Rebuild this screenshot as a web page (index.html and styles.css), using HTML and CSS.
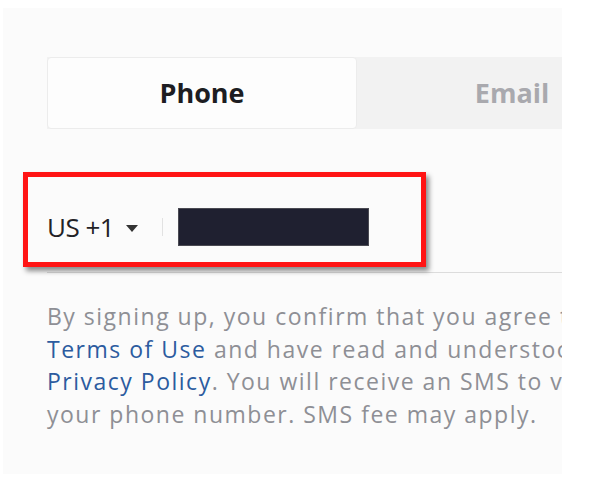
FILE: index.html
```html
<!DOCTYPE html>
<html lang="en">
<head>
<meta charset="utf-8">
<title>Sign up</title>
<link rel="stylesheet" href="styles.css">
</head>
<body>
<div class="panel">
  <div class="tabs">
    <div class="tab tab-active">Phone</div>
    <div class="tab tab-idle">Email</div>
  </div>
  <div class="phone-row">
    <span class="country">US +1</span>
    <svg class="caret" width="12" height="7" viewBox="0 0 12 7"><path d="M0 0H12L6 7Z" fill="#333"/></svg>
    <span class="divider"></span>
    <span class="redacted"></span>
  </div>
  <p class="terms">
    <span class="line">By signing up, you confirm that you agree to our</span>
    <span class="line"><a class="link" href="#">Terms of Use</a> and have read and understood our</span>
    <span class="line"><a class="link" href="#">Privacy Policy</a>. You will receive an SMS to verify</span>
    <span class="line">your phone number. SMS fee may apply.</span>
  </p>
</div>
<div class="highlight"></div>
</body>
</html>
```
FILE: styles.css
```css
html, body {
  margin: 0;
  padding: 0;
  background: #ffffff;
}
body {
  width: 600px;
  height: 488px;
  overflow: hidden;
  position: relative;
  font-family: "Open Sans", "Liberation Sans", sans-serif;
}
.panel {
  margin: 8px 0 0 3px;
  width: 559px;
  height: 466px;
  background: #fbfbfb;
  overflow: hidden;
  padding: 49px 0 0 44px;
  box-sizing: border-box;
}
.tabs {
  display: flex;
  width: 620px;
  height: 72px;
  background: #f2f2f2;
}
.tab {
  width: 310px;
  flex: none;
  display: flex;
  align-items: center;
  justify-content: center;
  font-size: 27px;
  font-weight: 700;
  box-sizing: border-box;
  padding-bottom: 2px;
}
.tab-active {
  background: #fdfdfd;
  border: 1px solid #ececec;
  border-radius: 4px;
  color: #1d1d22;
}
.tab-idle {
  color: #a9a9ae;
}
.phone-row {
  margin-top: 67px;
  width: 600px;
  height: 77px;
  box-sizing: border-box;
  border-bottom: 1px solid #dcdcdc;
  padding-bottom: 14px;
  display: flex;
  align-items: center;
}
.country {
  font-size: 26px;
  color: #222226;
  letter-spacing: -0.5px;
}
.caret {
  margin-left: 12px;
  margin-top: 3px;
}
.divider {
  width: 1px;
  height: 18px;
  background: #e2e2e2;
  margin-left: 24px;
}
.redacted {
  width: 191px;
  height: 38px;
  box-sizing: border-box;
  background: #1f2030;
  border: 1px solid #4a4a52;
  margin-left: 15px;
}
.terms {
  margin: 27px 0 0 0;
  font-size: 23px;
  line-height: 32.5px;
  letter-spacing: 1.5px;
  color: #8e8f95;
  white-space: nowrap;
}
.line {
  display: block;
}
.link {
  color: #2c5b9f;
  text-decoration: none;
}
.highlight {
  position: absolute;
  left: 23px;
  top: 172px;
  width: 403px;
  height: 95px;
  box-sizing: border-box;
  border: 5px solid #ff1414;
  box-shadow: 3px 4px 5px rgba(0, 0, 0, 0.45);
}
```
